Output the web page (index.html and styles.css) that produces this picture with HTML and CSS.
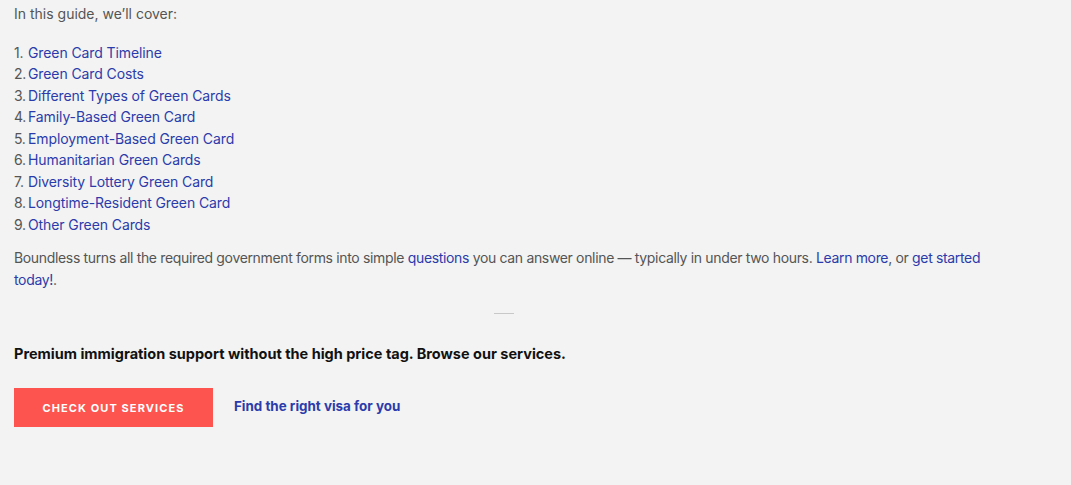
FILE: index.html
```html
<!DOCTYPE html>
<html lang="en">
<head>
    <meta charset="UTF-8">
    <meta name="viewport" content="width=device-width, initial-scale=1.0">
    <title>Green Card Guide</title>
    <link rel="stylesheet" href="styles.css">
</head>
<body>
    <div class="article">
        <p class="intro">In this guide, we’ll cover:</p>

        <ol class="toc">
            <li><a href="#">Green Card Timeline</a></li>
            <li><a href="#">Green Card Costs</a></li>
            <li><a href="#">Different Types of Green Cards</a></li>
            <li><a href="#">Family-Based Green Card</a></li>
            <li><a href="#">Employment-Based Green Card</a></li>
            <li><a href="#">Humanitarian Green Cards</a></li>
            <li><a href="#">Diversity Lottery Green Card</a></li>
            <li><a href="#">Longtime-Resident Green Card</a></li>
            <li><a href="#">Other Green Cards</a></li>
        </ol>

        <p class="pitch">Boundless turns all the required government forms into simple <a href="#">questions</a> you can answer online — typically in under two hours. <a href="#">Learn more</a>, or <a href="#">get started today!</a>.</p>

        <hr class="divider">

        <p class="promo">Premium immigration support without the high price tag. Browse our services.</p>

        <div class="actions">
            <a href="#" class="btn">Check out services</a>
            <a href="#" class="visa-link">Find the right visa for you</a>
        </div>
    </div>
</body>
</html>
```

FILE: styles.css
```css
body {
    margin: 0;
    background-color: #f2f3f2;
    font-family: Inter, "Noto Sans", sans-serif;
    font-size: 14px;
    line-height: 21.5px;
    color: #555;
}
.article {
    padding: 3px 14px 0;
    width: 980px;
}
a {
    color: #2c3bab;
    text-decoration: none;
}
.intro {
    margin: 0 0 17px;
}
.toc {
    list-style: none;
    margin: 0;
    padding: 0;
    counter-reset: toc;
    letter-spacing: -0.1px;
}
.toc li {
    counter-increment: toc;
}
.toc li::before {
    content: counter(toc) ".";
    display: inline-block;
    width: 14px;
    letter-spacing: -0.3px;
}
.pitch {
    margin: 12px 0 0;
    letter-spacing: -0.34px;
}
.divider {
    width: 20px;
    margin: 23px auto 0;
    border: none;
    border-top: 1px solid #c8c8c8;
}
.promo {
    margin: 29px 0 0;
    color: #111;
    font-weight: 700;
    font-size: 14.5px;
}
.actions {
    display: flex;
    align-items: center;
    gap: 21px;
    margin-top: 23px;
}
.btn {
    display: inline-block;
    width: 199px;
    height: 39px;
    line-height: 41px;
    text-align: center;
    background-color: #fd544f;
    color: #fff;
    font-size: 11px;
    font-weight: 700;
    letter-spacing: 1.1px;
    text-transform: uppercase;
}
.visa-link {
    font-weight: 700;
    font-size: 13.4px;
}
```
